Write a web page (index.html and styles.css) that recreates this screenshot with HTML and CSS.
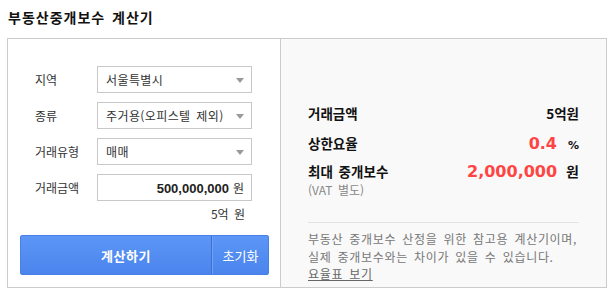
FILE: index.html
```html
<!DOCTYPE html>
<html lang="ko">
<head>
<meta charset="utf-8">
<title>부동산중개보수 계산기</title>
<link rel="stylesheet" href="styles.css">
</head>
<body>
<h1 class="title">부동산중개보수 계산기</h1>
<div class="calc">
  <div class="form-panel">
    <div class="fields">
      <div class="field"><span class="label">지역</span><div class="select">서울특별시<span class="arrow"></span></div></div>
      <div class="field"><span class="label">종류</span><div class="select">주거용(오피스텔 제외)<span class="arrow"></span></div></div>
      <div class="field"><span class="label">거래유형</span><div class="select">매매<span class="arrow"></span></div></div>
      <div class="field"><span class="label">거래금액</span><div class="input"><b class="num">500,000,000</b><span class="unit">원</span></div></div>
      <div class="hint">5억 원</div>
    </div>
    <div class="actions">
      <button class="btn btn-calc">계산하기</button><button class="btn btn-reset">초기화</button>
    </div>
  </div>
  <div class="result-panel">
    <div class="row row-amount"><span class="r-label">거래금액</span><span class="r-value">5억원</span></div>
    <div class="row row-rate"><span class="r-label">상한요율</span><span class="r-value"><em class="red rate">0.4</em><span class="pct">%</span></span></div>
    <div class="row row-fee"><span class="r-label">최대 중개보수</span><span class="r-value"><em class="red fee">2,000,000</em><span class="won">원</span></span></div>
    <div class="vat">(VAT 별도)</div>
    <div class="notes">
      <p>부동산 중개보수 산정을 위한 참고용 계산기이며,<br>실제 중개보수와는 차이가 있을 수 있습니다.</p>
      <a class="link" href="#">요율표 보기</a>
    </div>
  </div>
</div>
</body>
</html>
```

FILE: styles.css
```css
* { box-sizing: border-box; }
body {
  margin: 0;
  font-family: "Noto Sans CJK KR", sans-serif;
  color: #333;
  background: #fff;
  word-spacing: 2px;
}
.title {
  margin: 0;
  padding: 7px 0 11px 8px;
  font-size: 14px;
  line-height: 20px;
  font-weight: bold;
  letter-spacing: 1px;
  color: #111;
}
.calc {
  margin-left: 7px;
  width: 600px;
  height: 250px;
  border: 1px solid #ccc;
  display: flex;
}
.form-panel {
  width: 273px;
  border-right: 1px solid #ccc;
  padding: 27px 28px 12px 27px;
  display: flex;
  flex-direction: column;
  background: #fff;
}
.fields {
  display: flex;
  flex-direction: column;
  gap: 9px;
}
.field {
  display: flex;
  align-items: center;
  height: 27px;
}
.label {
  width: 62px;
  font-size: 12px;
  color: #333;
}
.select, .input {
  position: relative;
  width: 155px;
  height: 27px;
  border: 1px solid #c8c8c8;
  background: #fff;
  font-size: 12px;
  line-height: 25px;
  padding: 0 8px;
  color: #333;
  white-space: nowrap;
}
.select { letter-spacing: 0.4px; }
.arrow {
  position: absolute;
  right: 7px;
  top: 11px;
  width: 0;
  height: 0;
  border-left: 4px solid transparent;
  border-right: 4px solid transparent;
  border-top: 5px solid #9a9a9a;
}
.input {
  text-align: right;
  padding-right: 7px;
}
.num {
  font-family: "Liberation Sans", sans-serif;
  font-size: 13px;
  font-weight: bold;
  color: #222;
}
.unit { margin-left: 4px; }
.hint {
  margin-top: -4px;
  text-align: right;
  padding-right: 7px;
  font-size: 12px;
  line-height: 16px;
  color: #333;
}
.actions {
  margin: auto -17px 0 -15px;
  display: flex;
  height: 40px;
  border: 1px solid #4a7fe3;
  border-radius: 2px;
  background: linear-gradient(#5c96f6, #4b84ec);
  overflow: hidden;
}
.btn {
  border: 0;
  background: transparent;
  color: #fff;
  font-family: "Noto Sans CJK KR", sans-serif;
  font-size: 13px;
  padding: 0;
  cursor: pointer;
}
.btn-calc {
  flex: 1;
  font-weight: bold;
  padding-left: 20px;
  letter-spacing: 0.5px;
  border-right: 1px solid #3f6fd0;
}
.btn-reset {
  width: 56px;
  border-left: 1px solid #6fa2f7;
}
.result-panel {
  flex: 1;
  background: #f9f9f9;
  padding: 64px 27px 0 27px;
  display: flex;
  flex-direction: column;
}
.row {
  display: flex;
  justify-content: space-between;
  align-items: center;
  height: 20px;
}
.row-rate { margin-top: 10px; }
.row-fee { margin-top: 8px; }
.r-label {
  font-size: 13.5px;
  font-weight: bold;
  color: #111;
}
.r-value {
  font-size: 13.5px;
  font-weight: bold;
  color: #111;
  display: flex;
  align-items: baseline;
}
.red {
  font-style: normal;
  color: #ff4444;
  font-family: "DejaVu Sans", sans-serif;
  font-weight: bold;
  font-size: 16px;
}
.pct {
  font-family: "DejaVu Sans", sans-serif;
  font-size: 11px;
  margin-left: 11px;
}
.won { margin-left: 9px; font-size: 14px; }
.vat {
  font-size: 12px;
  line-height: 18px;
  color: #888;
}
.notes {
  margin-top: 23px;
  border-top: 1px solid #e3e3e3;
  padding-top: 7px;
  font-size: 12px;
  line-height: 17.5px;
  letter-spacing: 0.7px;
  color: #777;
}
.notes p { margin: 0; }
.link {
  color: #666;
  text-decoration: underline;
}
```
